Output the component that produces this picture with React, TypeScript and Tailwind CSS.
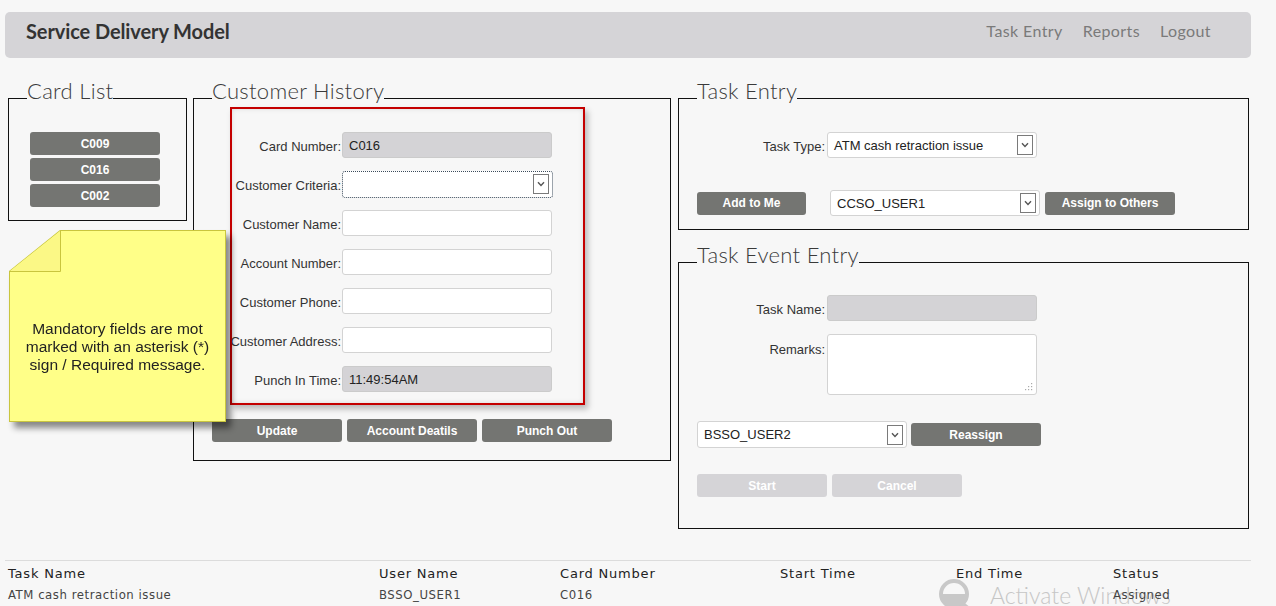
import React from 'react'

const btn =
    "flex items-center justify-center rounded-[3px] bg-[#747572] text-white font-bold text-[12px] font-['Liberation_Sans',Arial,sans-serif] leading-none"
const btnOff =
    "flex items-center justify-center rounded-[3px] bg-[#d5d4d7] text-white font-bold text-[12px] font-['Liberation_Sans',Arial,sans-serif] leading-none"
const label = "text-[13px] text-[#333] whitespace-nowrap text-right leading-none pt-[2px]"

function Chevron() {
    return (
        <span className="flex items-center justify-center w-[16px] h-[20px] border border-[#7a7a7a] bg-white shrink-0">
            <svg width="8" height="6" viewBox="0 0 8 6">
                <path d="M1 1.2 L4 4.4 L7 1.2" stroke="#555" strokeWidth="1.4" fill="none" />
            </svg>
        </span>
    )
}

function Select({ value, className = '', focus = false }: { value?: string; className?: string; focus?: boolean }) {
    return (
        <div
            className={`flex items-center justify-between bg-white rounded-[3px] pl-[6px] pr-[3px] text-[13px] text-[#222] ${
                focus ? 'border border-dotted border-[#3a4a5a]' : 'border border-[#d3d3d3]'
            } ${className}`}
        >
            <span className="leading-none">{value}</span>
            <Chevron />
        </div>
    )
}

function Input({ value, gray = false, className = '' }: { value?: string; gray?: boolean; className?: string }) {
    return (
        <div
            className={`flex items-center rounded-[3px] pl-[6px] text-[13px] text-[#222] leading-none border ${
                gray ? 'bg-[#d4d3d6] border-[#cbcbcb]' : 'bg-white border-[#d3d3d3]'
            } ${className}`}
        >
            {value}
        </div>
    )
}

function Box({
    title,
    className = '',
    bodyClassName = '',
    children,
}: {
    title: string
    className?: string
    bodyClassName?: string
    children: React.ReactNode
}) {
    return (
        <div className={className}>
            <div className="flex items-end">
                <div className="w-[19px] border-b border-[#111]" />
                <span className="mb-[-3px] text-[22px] leading-[22px] font-light text-[#3a3a3a] font-['Lato',sans-serif] tracking-[0.3px]">
                    {title}
                </span>
                <div className="flex-1 border-b border-[#111]" />
            </div>
            <div className={`border-x border-b border-[#111] ${bodyClassName}`}>{children}</div>
        </div>
    )
}

function StickyNote() {
    return (
        <div className="relative z-10 ml-px mt-[9px] w-[217px] h-[192px] drop-shadow-[5px_6px_3px_rgba(0,0,0,0.45)]">
            <div className="h-full p-px bg-[#c9c53e] [clip-path:polygon(51px_0,100%_0,100%_100%,0_100%,0_41px)]">
                <div className="h-full flex flex-col bg-[#ffff88] [clip-path:polygon(50px_0,100%_0,100%_100%,0_100%,0_40px)]">
                    <svg width="51" height="41" viewBox="0 0 51 41" className="shrink-0">
                        <path d="M0 40.5 L50.5 40.5 L50.5 0" stroke="#c9c53e" strokeWidth="1" fill="#fbf886" />
                    </svg>
                    <div className="flex-1 flex items-center justify-center text-center text-[15.5px] leading-[18px] text-[#222] whitespace-nowrap">
                        Mandatory fields are mot
                        <br />
                        marked with an asterisk (*)
                        <br />
                        sign / Required message.
                    </div>
                </div>
            </div>
        </div>
    )
}

const customerRows: { label: string; kind?: 'gray' | 'select'; value?: string }[] = [
    { label: 'Card Number:', kind: 'gray', value: 'C016' },
    { label: 'Customer Criteria:', kind: 'select' },
    { label: 'Customer Name:' },
    { label: 'Account Number:' },
    { label: 'Customer Phone:' },
    { label: 'Customer Address:' },
    { label: 'Punch In Time:', kind: 'gray', value: '11:49:54AM' },
]

export default function App() {
    return (
        <div className="relative w-[1276px] h-[606px] overflow-hidden bg-[#f7f7f7] font-['Liberation_Sans',Arial,sans-serif]">
            {/* Header */}
            <div className="ml-[5px] mt-[12px] w-[1246px] h-[46px] rounded-[5px] bg-[#d5d4d7] flex items-start justify-between pt-[8px] pl-[21px] pr-[40px]">
                <span className="font-['Lato',sans-serif] font-bold text-[20px] leading-[22px] text-[#333] tracking-[-0.1px]">
                    Service Delivery Model
                </span>
                <nav className="flex gap-[20px] font-['Lato',sans-serif] text-[16px] leading-[22px] text-[#7a7a7a] tracking-[0.4px]">
                    <span>Task Entry</span>
                    <span>Reports</span>
                    <span>Logout</span>
                </nav>
            </div>

            {/* Main */}
            <div className="flex items-start pl-[8px] mt-[22px]">
                {/* Left column */}
                <div className="w-[179px] shrink-0 mr-[6px]">
                    <Box title="Card List" bodyClassName="pt-[33px] pl-[21px] pb-[13px]">
                        <div className="flex flex-col gap-[3px]">
                            {['C009', 'C016', 'C002'].map((c) => (
                                <div key={c} className={`${btn} w-[130px] h-[23px]`}>
                                    {c}
                                </div>
                            ))}
                        </div>
                    </Box>
                    <StickyNote />
                </div>

                {/* Middle column */}
                <Box title="Customer History" className="w-[478px] shrink-0 mr-[7px]" bodyClassName="pt-[8px] pl-[18px] pb-[18px]">
                    <div className="ml-[18px] w-[355px] h-[298px] outline-2 outline-solid outline-[#c40000] -outline-offset-2 shadow-[3px_4px_6px_rgba(0,0,0,0.25),inset_0_0_6px_rgba(0,0,0,0.22)] pt-[25px] flex flex-col gap-[13px]">
                        {customerRows.map((r) => (
                            <div key={r.label} className="flex items-center h-[26px]">
                                <div className={`${label} w-[111px] mr-px`}>{r.label}</div>
                                {r.kind === 'select' ? (
                                    <Select focus className="w-[211px] h-[27px]" />
                                ) : (
                                    <Input gray={r.kind === 'gray'} value={r.value} className="w-[210px] h-[26px]" />
                                )}
                            </div>
                        ))}
                    </div>
                    <div className="flex gap-[5px] mt-[14px]">
                        <div className={`${btn} w-[130px] h-[23px]`}>Update</div>
                        <div className={`${btn} w-[130px] h-[23px]`}>Account Deatils</div>
                        <div className={`${btn} w-[130px] h-[23px]`}>Punch Out</div>
                    </div>
                </Box>

                {/* Right column */}
                <div className="w-[571px] shrink-0 flex flex-col gap-[14px]">
                    <Box title="Task Entry" bodyClassName="pt-[33px] pb-[13px]">
                        <div className="flex items-center">
                            <div className={`${label} w-[146px] mr-[2px]`}>Task Type:</div>
                            <Select value="ATM cash retraction issue" className="w-[210px] h-[26px]" />
                        </div>
                        <div className="flex items-center mt-[32px] pl-[18px]">
                            <div className={`${btn} w-[109px] h-[23px]`}>Add to Me</div>
                            <Select value="CCSO_USER1" className="ml-[24px] w-[210px] h-[26px]" />
                            <div className={`${btn} ml-[5px] w-[130px] h-[23px]`}>Assign to Others</div>
                        </div>
                    </Box>

                    <Box title="Task Event Entry" bodyClassName="pt-[32px] pb-[31px]">
                        <div className="flex items-center">
                            <div className={`${label} w-[146px] mr-[2px]`}>Task Name:</div>
                            <Input gray className="w-[210px] h-[26px]" />
                        </div>
                        <div className="flex items-start mt-[13px]">
                            <div className={`${label} w-[146px] mr-[2px] pt-[9px]`}>Remarks:</div>
                            <div className="w-[210px] h-[61px] bg-white border border-[#d3d3d3] rounded-[3px] flex items-end justify-end p-[3px]">
                                <svg width="9" height="9" viewBox="0 0 9 9">
                                    <g fill="#aaa">
                                        <rect x="7" y="1" width="1.2" height="1.2" />
                                        <rect x="4" y="4" width="1.2" height="1.2" />
                                        <rect x="7" y="4" width="1.2" height="1.2" />
                                        <rect x="1" y="7" width="1.2" height="1.2" />
                                        <rect x="4" y="7" width="1.2" height="1.2" />
                                        <rect x="7" y="7" width="1.2" height="1.2" />
                                    </g>
                                </svg>
                            </div>
                        </div>
                        <div className="flex items-center mt-[26px] pl-[18px]">
                            <Select value="BSSO_USER2" className="w-[210px] h-[27px]" />
                            <div className={`${btn} ml-[4px] w-[130px] h-[23px]`}>Reassign</div>
                        </div>
                        <div className="flex gap-[5px] mt-[26px] pl-[18px]">
                            <div className={`${btnOff} w-[130px] h-[23px]`}>Start</div>
                            <div className={`${btnOff} w-[130px] h-[23px]`}>Cancel</div>
                        </div>
                    </Box>
                </div>
            </div>

            {/* Task table */}
            <div className="ml-[5px] mt-[31px] w-[1246px] border-t border-[#dcdcdc] pl-[3px] font-['DejaVu_Sans_Condensed','DejaVu_Sans',sans-serif] text-[13px]">
                <div className="grid grid-cols-[371px_181px_220px_176px_157px_1fr] pt-[5px] leading-[16px] text-[#222] tracking-[0.8px] font-['DejaVu_Sans',sans-serif]">
                    <span>Task Name</span>
                    <span>User Name</span>
                    <span>Card Number</span>
                    <span>Start Time</span>
                    <span>End Time</span>
                    <span>Status</span>
                </div>
                <div className="grid grid-cols-[371px_181px_220px_176px_157px_1fr] mt-[5px] leading-[16px] text-[#444] tracking-[0.55px]">
                    <span>ATM cash retraction issue</span>
                    <span>BSSO_USER1</span>
                    <span>C016</span>
                    <span />
                    <span />
                    <span className="relative z-10">Assigned</span>
                </div>
            </div>

            {/* Activate Windows watermark */}
            <div className="absolute left-[938px] top-[578px] flex items-start gap-[14px] pointer-events-none">
                <svg width="38" height="34" viewBox="0 0 38 34">
                    <circle cx="16" cy="16" r="13" fill="none" stroke="#c8c8c8" strokeWidth="4" />
                    <path d="M3 16 A13 13 0 0 0 29 16 Z" fill="#c8c8c8" />
                    <path d="M24 26 L34 34" stroke="#c8c8c8" strokeWidth="5" />
                </svg>
                <span className="font-['Lato',sans-serif] font-light text-[23px] leading-[28px] text-[#c6c6c6] mt-[3px]">
                    Activate Windows
                </span>
            </div>
        </div>
    )
}
